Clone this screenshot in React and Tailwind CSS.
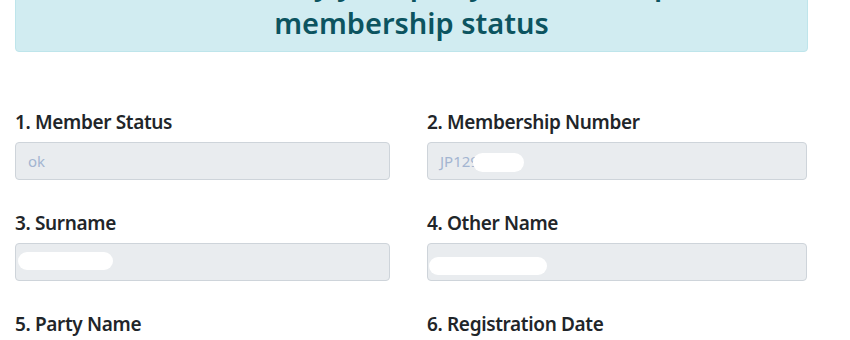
import React from 'react';

// blur: [left, top, width, height] of the white redaction blob inside the input
const fields = [
  { label: '1. Member Status', value: 'ok' },
  { label: '2. Membership Number', value: 'JP129', blur: [45, 10, 51, 19] },
  { label: '3. Surname', value: '', blur: [2, 8, 95, 18] },
  { label: '4. Other Name', value: '', blur: [1, 13, 118, 18] },
  { label: '5. Party Name', value: null },
  { label: '6. Registration Date', value: null },
];

/**
 * Read-only field with a redaction blob over part of the value
 */
const Field = ({ label, value, blur }) => (
  <div className="mb-[29px]">
    <label className="block text-[19px] leading-[28px] font-semibold text-[#212529] mb-[6px] tracking-[-0.35px]">
      {label}
    </label>
    {value !== null && (
      <div className="relative h-[38px] rounded-[4px] border border-[#ced4da] bg-[#e9ecef] px-3 flex items-center text-[15px] text-[#a3b5d1]">
        {value}
        {blur && (
          <span
            className="absolute rounded-full bg-white"
            style={{ left: blur[0], top: blur[1], width: blur[2], height: blur[3] }}
          />
        )}
      </div>
    )}
  </div>
);

export default function App() {
  return (
    <div className="w-[850px] h-[340px] overflow-hidden bg-white font-['Noto_Sans','Open_Sans',sans-serif]">
      <div className="ml-[15px] w-[793px] -mt-[40px] rounded-[4px] border border-[#bee5eb] bg-[#d1ecf1] px-5 pt-[4px] pb-[10px] text-center text-[#0c5460] text-[29px] leading-[37px] font-semibold">
        <div className="mb-[2px]">Please verify your party membership</div>
        <div>membership status</div>
      </div>
      <div className="ml-[15px] mt-[56px] grid grid-cols-[375px_380px] gap-x-[37px]">
        {fields.map((f) => (
          <Field key={f.label} {...f} />
        ))}
      </div>
    </div>
  );
}
